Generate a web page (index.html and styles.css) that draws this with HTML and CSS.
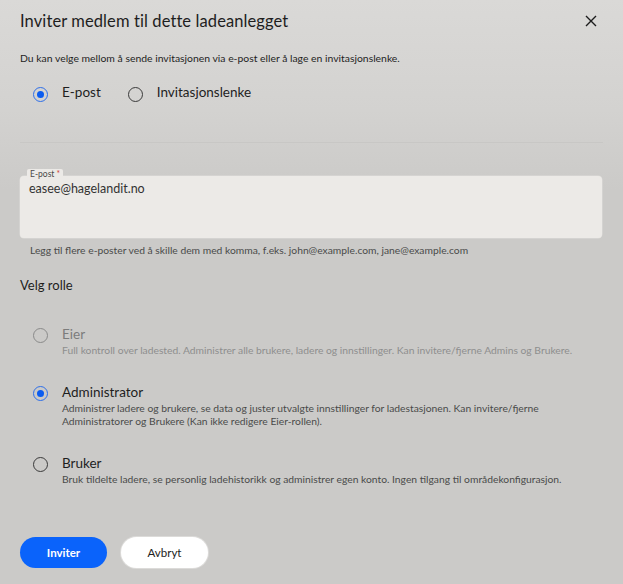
FILE: index.html
```html
<!DOCTYPE html>
<html lang="no">
<head>
<meta charset="utf-8">
<title>Inviter medlem</title>
<link rel="stylesheet" href="styles.css">
</head>
<body>
<div class="modal">
  <header class="head">
    <h1 class="title">Inviter medlem til dette ladeanlegget</h1>
    <button class="close" aria-label="Lukk">
      <svg width="12" height="12" viewBox="0 0 12 12"><path d="M1 1 L11 11 M11 1 L1 11" stroke="#1c1c1c" stroke-width="1.4" fill="none"/></svg>
    </button>
  </header>
  <p class="intro">Du kan velge mellom å sende invitasjonen via e-post eller å lage en invitasjonslenke.</p>
  <div class="method">
    <label class="opt"><span class="radio on"></span><span class="opt-label">E-post</span></label>
    <label class="opt"><span class="radio"></span><span class="opt-label">Invitasjonslenke</span></label>
  </div>
  <hr class="divider">
  <div class="field">
    <span class="field-label">E-post <span class="req">*</span></span>
    <div class="field-box">easee@hagelandit.no</div>
  </div>
  <p class="hint">Legg til flere e-poster ved å skille dem med komma, f.eks. john@example.com, jane@example.com</p>
  <h2 class="section">Velg rolle</h2>
  <div class="roles">
    <div class="role disabled">
      <span class="radio"></span>
      <div class="role-text">
        <div class="role-name">Eier</div>
        <div class="role-desc">Full kontroll over ladested. Administrer alle brukere, ladere og innstillinger. Kan invitere/fjerne Admins og Brukere.</div>
      </div>
    </div>
    <div class="role">
      <span class="radio on"></span>
      <div class="role-text">
        <div class="role-name">Administrator</div>
        <div class="role-desc">Administrer ladere og brukere, se data og juster utvalgte innstillinger for ladestasjonen. Kan invitere/fjerne Administratorer og Brukere (Kan ikke redigere Eier-rollen).</div>
      </div>
    </div>
    <div class="role">
      <span class="radio"></span>
      <div class="role-text">
        <div class="role-name">Bruker</div>
        <div class="role-desc">Bruk tildelte ladere, se personlig ladehistorikk og administrer egen konto. Ingen tilgang til områdekonfigurasjon.</div>
      </div>
    </div>
  </div>
  <div class="actions">
    <button class="btn primary">Inviter</button>
    <button class="btn secondary">Avbryt</button>
  </div>
</div>
</body>
</html>
```
FILE: styles.css
```css
* { box-sizing: border-box; }
html, body { height: 100%; }
body {
  margin: 0;
  background: linear-gradient(180deg, #dad9d7 0px, #d3d2d0 110px, #cbcac8 190px, #cbcac8 100%);
  font-family: Lato, "Noto Sans", sans-serif;
  color: #1e1e1e;
}
.modal { padding: 11px 20px 0 20px; }
.head { display: flex; justify-content: space-between; align-items: center; }
.title { margin: 0; font-size: 16.5px; font-weight: 400; letter-spacing: 0.1px; line-height: 20px; }
.close { background: none; border: 0; padding: 0; margin-right: 5px; width: 14px; height: 14px; display: flex; align-items: center; justify-content: center; }
.intro { margin: 21px 0 0; font-size: 10.4px; line-height: 12px; color: #1e1e1e; }
.method { display: flex; gap: 27px; margin: 22px 0 0 13px; }
.opt { display: flex; align-items: center; gap: 14px; }
.opt-label { font-size: 13.5px; line-height: 16px; position: relative; top: -2px; }
.radio {
  width: 15px; height: 15px; border-radius: 50%;
  border: 1.4px solid #3a3a3a; flex: none;
  display: flex; align-items: center; justify-content: center;
}
.radio.on { border-color: #2f6fe8; }
.radio.on::after { content: ""; width: 7px; height: 7px; border-radius: 50%; background: #0b5cf0; }
.divider { border: 0; border-top: 1px solid #c8c7c5; margin: 40px 0 0; }
.field { margin-top: 26px; position: relative; padding-top: 7px; }
.field-label {
  position: absolute; left: 7px; top: 0;
  background: #eceae7; padding: 0 3px; border-radius: 2px 2px 0 0;
  font-size: 8.5px; line-height: 10px; color: #4a4a4a;
}
.req { color: #d0463a; }
.field-box {
  height: 62px; margin-right: 1px; background: #eceae7;
  border-radius: 4px; padding: 6px 9px;
  font-size: 12.5px; line-height: 14px; color: #333;
  box-shadow: 0 0 0 0.5px #dedcd9;
}
.hint { margin: 6px 0 0 10px; font-size: 10.3px; line-height: 12px; color: #4a4a4a; }
.section { margin: 21px 0 0; font-size: 13px; font-weight: 400; line-height: 16px; }
.roles { margin-top: 35px; display: flex; flex-direction: column; gap: 29px; padding-left: 13px; }
.role { display: flex; gap: 14px; align-items: flex-start; }
.role-name { font-size: 13.5px; line-height: 16px; margin-top: -2px; }
.role-desc { font-size: 10.3px; line-height: 13px; color: #4a4a4a; margin-top: 2px; max-width: 530px; }
.role.disabled .radio { border-color: #8a8a8a; }
.role.disabled .role-name { color: #7c7c7c; }
.role.disabled .role-desc { color: #8e8e8e; }
.actions { display: flex; gap: 14px; margin-top: 51px; }
.btn { height: 31px; width: 87px; border-radius: 16px; border: 0; font-family: inherit; font-size: 11.5px; }
.primary { background: #0a63fb; color: #fff; font-weight: 700; }
.secondary { background: #fff; color: #222; box-shadow: 0 0 0 1px #dcdbd9; }
```
